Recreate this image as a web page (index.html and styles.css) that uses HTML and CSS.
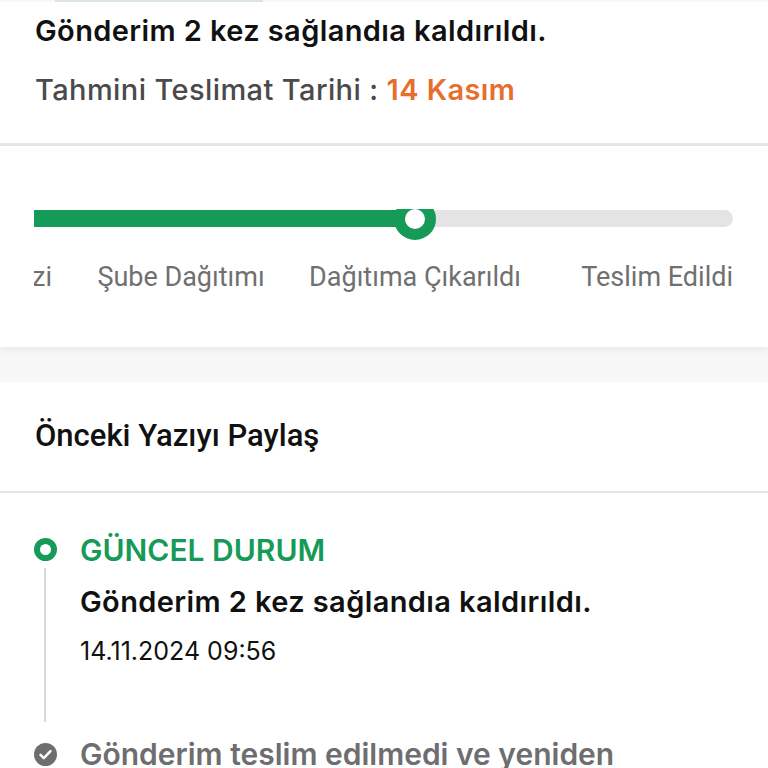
FILE: index.html
```html
<!DOCTYPE html>
<html lang="tr">
<head>
<meta charset="utf-8">
<link rel="stylesheet" href="styles.css">
</head>
<body>
<div class="page">
  <div class="top-strip"></div>
  <section class="summary">
    <h1 class="summary-title">Gönderim 2 kez sağlandıa kaldırıldı.</h1>
    <p class="summary-date">Tahmini Teslimat Tarihi : <span class="date-accent">14 Kasım</span></p>
  </section>

  <section class="progress">
    <div class="progress-clip">
      <div class="progress-strip">
        <div class="track">
          <div class="track-fill" style="width: 585px"></div>
          <div class="knob" style="left: 585px"></div>
        </div>
        <div class="labels">
          <span class="label label-first">Transfer Merkezi</span>
          <span class="label">Şube Dağıtımı</span>
          <span class="label">Dağıtıma Çıkarıldı</span>
          <span class="label label-last">Teslim Edildi</span>
        </div>
      </div>
    </div>
  </section>

  <div class="gap"></div>

  <section class="share">
    <h2 class="share-title">Önceki Yazıyı Paylaş</h2>
  </section>

  <section class="timeline">
    <div class="event current">
      <div class="event-rail">
        <span class="dot-ring"></span>
        <span class="rail-line"></span>
      </div>
      <div class="event-body">
        <div class="event-status">GÜNCEL DURUM</div>
        <div class="event-text">Gönderim 2 kez sağlandıa kaldırıldı.</div>
        <div class="event-time">14.11.2024 09:56</div>
      </div>
    </div>
    <div class="event past">
      <div class="event-rail">
        <span class="dot-check">
          <svg viewBox="0 0 24 24" width="23" height="23" aria-hidden="true">
            <circle cx="12" cy="12" r="12" fill="#6e6e70"/>
            <path d="M6.8 12.4l3.4 3.3 7-7.2" fill="none" stroke="#fff" stroke-width="2.6" stroke-linecap="round" stroke-linejoin="round"/>
          </svg>
        </span>
      </div>
      <div class="event-body">
        <div class="event-status past-text">Gönderim teslim edilmedi ve yeniden</div>
      </div>
    </div>
  </section>
</div>
</body>
</html>
```

FILE: styles.css
```css
* { box-sizing: border-box; }

html, body {
  margin: 0;
  padding: 0;
  background: #ffffff;
}

body {
  font-family: Inter, "Noto Sans", sans-serif;
  color: #111;
}

.page {
  width: 768px;
  height: 768px;
  overflow: hidden;
  background: #f7f7f7;
}

.top-strip {
  height: 2px;
  margin: 0 505px 0 55px;
  background: #dbe6e3;
}

.summary {
  background: #fff;
  padding: 11px 35px 0;
  height: 144px;
  border-bottom: 3px solid #e6e6e6;
}

.summary-title {
  margin: 0;
  font-size: 29px;
  font-weight: 600;
  line-height: 36px;
  letter-spacing: 0.4px;
  color: #111;
}

.summary-date {
  margin: 23px 0 0;
  font-size: 29px;
  font-weight: 500;
  line-height: 36px;
  letter-spacing: 0.4px;
  color: #4a4a4a;
}

.date-accent {
  color: #e66f2f;
  font-weight: 600;
}

.progress {
  background: #fff;
  height: 201px;
  padding-top: 63px;
  box-shadow: 0 3px 6px rgba(0, 0, 0, 0.06);
  position: relative;
}

.progress-clip {
  margin: 0 34px;
  overflow: hidden;
}

.progress-strip {
  margin-left: -204px;
  width: 903px;
}

.track {
  position: relative;
  height: 17px;
  margin-top: 1px;
  background: #e4e4e4;
  border-radius: 0 9px 9px 0;
}

.track-fill {
  height: 100%;
  background: #159a58;
}

.knob {
  position: absolute;
  top: 50%;
  width: 42px;
  height: 42px;
  margin: -21px 0 0 -21px;
  border-radius: 50%;
  background: #fff;
  border: 11px solid #159a58;
}

.labels {
  display: flex;
  margin-top: 33px;
}

.label {
  width: 234px;
  flex: none;
  text-align: center;
  font-family: Roboto, "Liberation Sans", sans-serif;
  font-size: 27px;
  line-height: 34px;
  color: #707070;
  white-space: nowrap;
}

.label-first {
  text-align: right;
  padding-right: 12px;
}

.label-last {
  width: 201px;
  text-align: right;
}

.gap {
  height: 35px;
}

.share {
  background: #fff;
  height: 111px;
  padding: 0 35px;
  display: flex;
  align-items: center;
  border-bottom: 2px solid #e4e4e4;
}

.share-title {
  margin: 0;
  font-family: Roboto, "Liberation Sans", sans-serif;
  font-size: 31px;
  font-weight: 500;
  color: #111;
  padding-bottom: 2px;
}

.timeline {
  background: #fff;
  padding: 39px 0 0 34px;
  height: 300px;
}

.event {
  display: flex;
}

.event-rail {
  width: 46px;
  flex: none;
  display: flex;
  flex-direction: column;
  align-items: flex-start;
}

.dot-ring {
  width: 23px;
  height: 23px;
  margin-top: 6px;
  border-radius: 50%;
  border: 6px solid #159a58;
  background: #fff;
}

.rail-line {
  width: 2px;
  height: 154px;
  margin: 7px 0 0 10px;
  background: #d8d8d8;
}

.dot-check {
  display: block;
  margin-top: 7px;
}

.dot-check svg { display: block; }

.event-body {
  display: flex;
  flex-direction: column;
}

.event-status {
  font-size: 30px;
  font-weight: 600;
  line-height: 36px;
  color: #159a58;
  white-space: nowrap;
}

.event-text {
  margin-top: 16px;
  font-size: 29px;
  font-weight: 600;
  line-height: 36px;
  letter-spacing: 0.4px;
  color: #111;
}

.event-time {
  margin-top: 15px;
  font-size: 25px;
  font-weight: 400;
  line-height: 32px;
  color: #111;
}

.past {
  margin-top: 14px;
}

.past-text {
  color: #6e6e70;
}
```
